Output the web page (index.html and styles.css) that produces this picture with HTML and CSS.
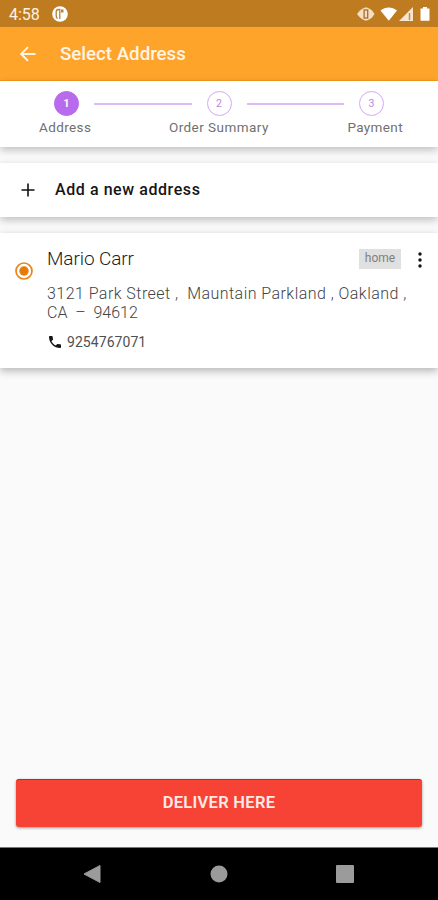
FILE: index.html
```html
<!DOCTYPE html>
<html lang="en">
<head>
<meta charset="utf-8">
<title>Select Address</title>
<link rel="stylesheet" href="styles.css">
</head>
<body>
<div class="screen">
  <div class="status">
    <span class="time">4:58</span>
    <svg class="app-badge" width="16" height="16" viewBox="0 0 16 16"><circle cx="8" cy="8" r="7.800" fill="#fff"/><path d="M7.800 13V3.500H6.500Q4.200 3.500 4.200 6V9.500Q4.200 11.500 5.500 12.500" fill="none" stroke="#b5813d" stroke-width="1.300"/><path d="M9 3.500h2.500v3H9z" fill="#b5813d"/></svg>
    <svg class="status-icons" width="74" height="16" viewBox="0 0 74 16">
      <path d="M0 8l3-3.500L5 3l3-1.500h2L13 3l2 1.500L17.500 8 15 11.500 13 13l-3 1.500H8L5 13l-2-1.500z" fill="#f5dfc4"/><rect x="7.100" y="4" width="3.600" height="8" fill="#f5dfc4" stroke="#a96d24" stroke-width="1.300"/>
      <path d="M23.500 4.500c5-4 11.500-4 16.500 0L31.800 14.800z" fill="#fff"/>
      <path d="M42 15L56 1v14z" fill="#f8e6d0"/><path d="M52.500 7v7" stroke="#c58a48" stroke-width="1.500"/>
      <path d="M63.500 2.500H66V1h4v1.500h2.500v12.300h-9z" fill="#fff"/>
    </svg>
  </div>
  <header class="appbar">
    <svg width="16" height="16" viewBox="0 0 16 16"><path d="M15.500 8H1.500M8 1.200L1.200 8 8 14.800" fill="none" stroke="#fff4e2" stroke-width="1.900"/></svg>
    <h1 class="title">Select Address</h1>
  </header>
  <section class="stepper">
    <div class="track">
      <span class="dot active">1</span><span class="line"></span><span class="dot">2</span><span class="line"></span><span class="dot">3</span>
    </div>
    <div class="labels"><span>Address</span><span class="summary">Order Summary</span><span>Payment</span></div>
  </section>
  <section class="add">
    <svg width="14" height="14" viewBox="0 0 14 14"><path d="M7 .5v13M.5 7h13" stroke="#111" stroke-width="1.600"/></svg>
    <span class="add-text">Add a new address</span>
  </section>
  <section class="card">
    <svg class="radio" width="18" height="18" viewBox="0 0 18 18"><circle cx="9" cy="9" r="8" fill="none" stroke="#e8851c" stroke-width="1.700"/><circle cx="9" cy="9" r="4.700" fill="#e67a08"/></svg>
    <div class="details">
      <div class="name-row">
        <span class="name">Mario Carr</span>
        <span class="tag">home</span>
        <svg class="more" width="6" height="16" viewBox="0 0 6 16"><g fill="#111"><circle cx="3" cy="2" r="1.700"/><circle cx="3" cy="8" r="1.700"/><circle cx="3" cy="14" r="1.700"/></g></svg>
      </div>
      <p class="address"><span class="line-one">3121 Park Street ,&nbsp; Mauntain Parkland , Oakland ,</span><br><span class="line-two">CA&nbsp; –&nbsp; 94612</span></p>
      <div class="phone">
        <svg width="12" height="12" viewBox="3 3 18 18"><path d="M6.620 10.790c1.440 2.830 3.760 5.140 6.590 6.590l2.200-2.200c.27-.27.67-.36 1.020-.24 1.120.37 2.330.57 3.570.57.55 0 1 .45 1 1V20c0 .55-.45 1-1 1-9.390 0-17-7.610-17-17 0-.55.45-1 1-1h3.500c.55 0 1 .45 1 1 0 1.250.2 2.450.57 3.570.11.35.03.74-.25 1.020z" fill="#151515"/></svg>
        <span class="number">9254767071</span>
      </div>
    </div>
  </section>
  <main class="space"></main>
  <button class="deliver">DELIVER HERE</button>
  <nav class="navbar">
    <svg width="18" height="20" viewBox="0 0 18 20"><path d="M17 1.500v17L1 10z" fill="#9b9b9b" stroke="#9b9b9b" stroke-linejoin="round"/></svg>
    <svg width="18" height="18" viewBox="0 0 18 18"><circle cx="9" cy="9" r="8.500" fill="#9b9b9b"/></svg>
    <svg width="18" height="18" viewBox="0 0 18 18"><rect width="18" height="18" rx="1" fill="#9b9b9b"/></svg>
  </nav>
</div>
</body>
</html>
```
FILE: styles.css
```css
* { box-sizing: border-box; }
body { margin: 0; font-family: Roboto, "Liberation Sans", sans-serif; background: #fafafa; }
svg { display: block; flex: none; }
.screen { width: 438px; height: 900px; display: flex; flex-direction: column; overflow: hidden; }
.status { height: 27px; flex: none; background: #bf7b20; display: flex; align-items: center; padding: 1px 7px 0 9px; color: #fff3e3; }
.time { width: 43px; font-size: 16px; }
.status-icons { margin-left: auto; }
.appbar { height: 54px; flex: none; background: #ffa42b; border-bottom: 1px solid #f79a1c; display: flex; align-items: center; padding-left: 20px; gap: 24px; }
.title { margin: 0; font-size: 18.7px; font-weight: 500; color: #fff4e2; line-height: 24px; white-space: nowrap; }
.stepper { height: 66px; flex: none; background: #fff; padding: 10px 35px 0 39px; box-shadow: 0 3px 8px rgba(0,0,0,.24); }
.track { display: flex; align-items: center; padding: 0 19px 0 15px; }
.dot { width: 25px; height: 25px; flex: none; border: 1.5px solid #d4a9f4; border-radius: 50%; display: flex; align-items: center; justify-content: center; font-size: 10.5px; color: #b983e6; }
.dot.active { background: #b96bed; border-color: #b96bed; color: #fff; font-weight: 700; }
.line { flex: 1; height: 2px; margin: 0 15px; background: #dcbcf6; }
.labels { display: flex; justify-content: space-between; margin-top: 3px; font-size: 13.5px; line-height: 17px; color: #707070; letter-spacing: .38px; }
.summary { margin-right: 1px; letter-spacing: .45px; }
.add { height: 54px; flex: none; margin-top: 16px; background: #fff; box-shadow: 0 3px 8px rgba(0,0,0,.24); display: flex; align-items: center; gap: 20px; padding-left: 21px; }
.add-text { font-size: 16px; font-weight: 500; color: #151515; letter-spacing: .57px; margin-top: -1px; }
.card { height: 135px; flex: none; margin-top: 16px; background: #fff; box-shadow: 0 3px 8px rgba(0,0,0,.28); display: flex; padding-left: 15px; }
.radio { margin-top: 29px; }
.details { flex: 1; padding: 14px 16px 0 14px; }
.name-row { display: flex; align-items: center; height: 24px; }
.name { font-size: 19px; font-weight: 300; color: #222; white-space: nowrap; margin-top: -2px; letter-spacing: -.1px; }
.tag { width: 42px; height: 20px; margin: -1px 0 0 auto; background: #e0e0e0; color: #808080; font-size: 12px; line-height: 19px; text-align: center; }
.more { margin: 1px -1px 0 16px; }
.address { margin: 13px 0 0; font-size: 16px; font-weight: 300; line-height: 19px; color: #444; white-space: nowrap; }
.line-one { letter-spacing: .45px; }
.phone { display: flex; align-items: center; gap: 6px; margin: 11px 0 0 2px; height: 18px; }
.number { font-size: 14px; color: #505050; letter-spacing: .06px; }
.space { flex: 1; }
.deliver { flex: none; height: 48px; margin: 0 16px 20px; border: 0; border-top: 1px solid #e31b0c; border-radius: 3px; padding: 0 0 2px; background: #f64336; color: #ffeae8; font: 600 16.5px Roboto, "Liberation Sans", sans-serif; letter-spacing: .3px; box-shadow: 0 1px 3px rgba(0,0,0,.4); }
.navbar { height: 53px; flex: none; background: #000; border-top: 1px solid #777; display: flex; justify-content: space-between; align-items: center; padding: 0 84px 0 83px; }
```
